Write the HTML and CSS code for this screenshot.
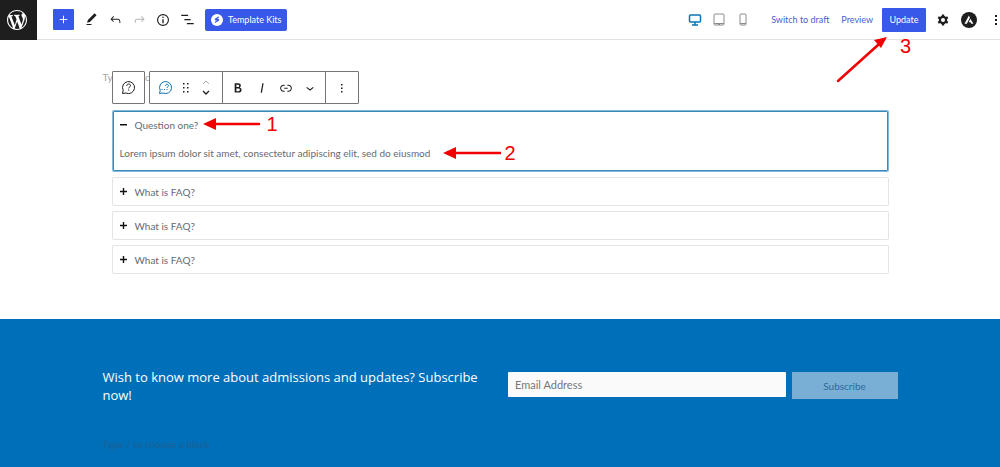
FILE: index.html
```html
<!DOCTYPE html>
<html lang="en">
  <head>
    <meta charset="utf-8" />
    <meta name="viewport" content="width=device-width, initial-scale=1.0" />
    <title>Edit Page</title>
    <link rel="stylesheet" href="styles.css">
  </head>
  <body>
    <header class="topbar">
      <a class="wp-logo" href="#" aria-label="View pages">
        <svg width="20" height="20" viewBox="0 0 20 20" fill="#fff"><path d="M20 10c0-5.51-4.49-10-10-10C4.48 0 0 4.49 0 10c0 5.52 4.48 10 10 10 5.51 0 10-4.48 10-10zM7.78 15.37L4.37 6.22c.55-.02 1.17-.08 1.17-.08.5-.06.44-1.13-.06-1.11 0 0-1.45.11-2.37.11-.18 0-.37 0-.58-.01C4.12 2.69 6.87 1.11 10 1.11c2.33 0 4.45.87 6.05 2.34-.68-.11-1.65.39-1.65 1.58 0 .74.45 1.36.9 2.1.35.61.55 1.36.55 2.46 0 1.49-1.4 5-1.4 5l-3.03-8.37c.54-.02.82-.17.82-.17.5-.05.44-1.25-.06-1.22 0 0-1.44.12-2.38.12-.87 0-2.33-.12-2.33-.12-.5-.03-.56 1.2-.06 1.22l.92.08 1.26 3.41zM17.41 10c.24-.64.74-1.87.43-4.25.7 1.29 1.05 2.71 1.05 4.25 0 3.29-1.73 6.24-4.4 7.78.97-2.59 1.94-5.2 2.92-7.78zM6.1 18.09C3.12 16.65 1.11 13.53 1.11 10c0-1.3.23-2.48.72-3.59C3.25 10.3 4.67 14.2 6.1 18.09zm4.03-6.63l2.58 6.98c-.86.29-1.76.45-2.71.45-.79 0-1.57-.11-2.29-.33.81-2.38 1.62-4.74 2.42-7.1z"/></svg>
      </a>
      <div class="tools">
        <button class="add-block" aria-label="Add block">
          <svg width="15" height="15" viewBox="0 0 24 24" fill="#fff"><path d="M18 11.2h-5.2V6h-1.6v5.2H6v1.6h5.2V18h1.6v-5.2H18z"/></svg>
        </button>
        <button class="icon-btn" aria-label="Tools">
          <svg width="15" height="15" viewBox="0 0 24 24"><path d="M20.1 5.1L16.9 2 6.2 12.7l-1.3 4.4 4.5-1.3L20.1 5.1zM4 20.8h8v-1.5H4v1.5z"/></svg>
        </button>
        <button class="icon-btn" aria-label="Undo">
          <svg width="15" height="15" viewBox="0 0 24 24"><path d="M18.3 11.7c-.6-.6-1.4-.9-2.3-.9H6.7l2.9-3.3-1.1-1-4.5 5L8.5 16l1-1-2.7-2.7H16c.5 0 .9.2 1.3.5 1 1 1 3.4 1 4.5v.3h1.5v-.2c0-1.5 0-4.3-1.5-5.700z"/></svg>
        </button>
        <button class="icon-btn icon-off" aria-label="Redo" disabled>
          <svg width="15" height="15" viewBox="0 0 24 24"><path d="M15.6 6.5l-1.1 1 2.9 3.3H8c-.9 0-1.7.3-2.3.9-1.4 1.5-1.4 4.2-1.4 5.6v.2h1.5v-.3c0-1.1 0-3.5 1-4.5.3-.3.7-.5 1.3-.5h9.2L14.5 15l1.1 1.1 4.6-4.6-4.6-5z"/></svg>
        </button>
        <button class="icon-btn" aria-label="Details">
          <svg width="16" height="16" viewBox="0 0 24 24"><path d="M12 3a9 9 0 1 0 0 18 9 9 0 0 0 0-18zm0 16.3a7.3 7.3 0 1 1 0-14.6 7.3 7.3 0 0 1 0 14.6zM11 11h2v6h-2zM11 7h2v2h-2z"/></svg>
        </button>
        <button class="icon-btn" aria-label="List view">
          <svg width="15" height="15" viewBox="0 0 24 24"><path d="M2 4.500h11v2H2zM7 11h10v2H7zM11 17.500h11v2H11z"/></svg>
        </button>
        <button class="kits">
          <svg width="12" height="12" viewBox="0 0 12 12"><circle cx="6" cy="6" r="6" fill="#fff"/><path d="M7.500 2.300L3.600 5l.4 1.300 2.200.3-2 .6-.2 1.900 4.300-2.700-.5-1.500-2-.3 2-.7z" fill="#3858e9"/></svg>
          Template Kits
        </button>
      </div>
      <div class="actions">
        <button class="icon-btn device active" aria-label="Desktop">
          <svg width="14" height="12" viewBox="0 0 14 12" fill="none" stroke="currentColor"><rect x="1.500" y="1" width="11" height="7" rx="1" stroke-width="1.500"/><path d="M7 8v3M4 11h6" stroke-width="1.500"/></svg>
        </button>
        <button class="icon-btn device" aria-label="Tablet">
          <svg width="12" height="13" viewBox="0 0 12 13" fill="none" stroke="currentColor"><rect x="1" y="1" width="10" height="11" rx="1"/><path d="M1 10.500h10M5 11.500h2"/></svg>
        </button>
        <button class="icon-btn device" aria-label="Mobile">
          <svg width="12" height="13" viewBox="0 0 12 13" fill="none" stroke="currentColor"><rect x="3" y="1" width="6" height="11" rx="1"/><path d="M3 10.500h6"/></svg>
        </button>
        <a class="action-link" href="#">Switch to draft</a>
        <a class="action-link" href="#">Preview</a>
        <div class="update-wrap">
          <button class="update">Update</button>
          <div class="note note-update">
            <svg width="52" height="48" viewBox="0 0 52 48"><path d="M2 45L42 9" stroke="#f00000" stroke-width="2.500" stroke-linecap="round"/><path d="M51 1L45 12 38 4z" fill="#f00000"/></svg>
            <span>3</span>
          </div>
        </div>
        <button class="icon-btn gear" aria-label="Settings">
          <svg width="12" height="12" viewBox="0 0 12 12"><g stroke="#1e1e1e" stroke-width="2.400"><path d="M6 .5v11M1.240 3.250l9.520 5.500M1.240 8.750l9.520-5.500"/></g><circle cx="6" cy="6" r="4.200" fill="#1e1e1e"/><circle cx="6" cy="6" r="2" fill="#fff"/></svg>
        </button>
        <button class="icon-btn astra" aria-label="Astra settings">
          <svg width="16" height="16" viewBox="0 0 16 16"><circle cx="8" cy="8" r="8" fill="#1e1e1e"/><path d="M7.900 3.500l1 2.200-3.100 6H3.500zM9.400 6.700l3 5h-2.100l-.8-1.500H7.700z" fill="#fff"/></svg>
        </button>
        <button class="icon-btn more" aria-label="Options">
          <svg width="4" height="12" viewBox="0 0 4 12"><path d="M1 1h2v2H1zM1 5h2v2H1zM1 9h2v2H1z"/></svg>
        </button>
      </div>
    </header>

    <main class="canvas">
      <p class="prompt">Type / to choose a block</p>

      <div class="faq">
        <div class="block-toolbar">
          <div class="bar">
            <button class="icon-btn" aria-label="Select FAQ">
              <svg width="15" height="15" viewBox="0 0 15 15" fill="none" stroke="currentColor"><path d="M1.500 13.500l.7-3.200A6 6 0 1 1 5 13z"/><path d="M5.800 5.800c0-2.400 3.700-2.400 3.700-.1 0 1.300-1.800 1.300-1.800 2.700M7.700 9.500v1.200"/></svg>
            </button>
          </div>
          <div class="bar">
            <div class="group">
              <button class="icon-btn child" aria-label="FAQ child">
                <svg width="15" height="15" viewBox="0 0 15 15" fill="none" stroke="currentColor"><path d="M1.500 13.500l.7-3.200A6 6 0 1 1 5 13z"/><path d="M7.500 5.800c0-2 3-2 3-.1 0 1.100-1.500 1.100-1.500 2.300M9 9v1M4 9v1M6.500 9v1"/></svg>
              </button>
              <button class="icon-btn drag" aria-label="Drag">
                <svg width="8" height="12" viewBox="0 0 8 12"><path d="M1 1h1.500v1.500H1zM5 1h1.500v1.500H5zM1 5h1.500v1.500H1zM5 5h1.500v1.500H5zM1 9h1.500v1.500H1zM5 9h1.500v1.500H5z"/></svg>
              </button>
              <button class="icon-btn" aria-label="Move">
                <svg width="10" height="16" viewBox="0 0 10 16" fill="none"><path d="M2 4l3-3 3 3" stroke="#aaa"/><path d="M2 11l3 3 3-3" stroke="#1e1e1e" stroke-width="1.300"/></svg>
              </button>
            </div>
            <div class="group format">
              <button class="icon-btn" aria-label="Bold">
                <svg width="16" height="16" viewBox="0 0 24 24"><path d="M14.7 11.3c1-.6 1.5-1.6 1.5-3 0-2.300-1.300-3.400-4-3.400H7v14h5.800c1.400 0 2.500-.3 3.300-1 .8-.7 1.200-1.700 1.200-2.900.1-1.900-.8-3.100-2.600-3.700zm-5.100-4h2.300c.6 0 1.100.1 1.400.4.3.3.5.7.5 1.200s-.2 1-.5 1.200c-.3.3-.8.4-1.400.4H9.600V7.300zm4.600 9c-.4.3-1 .4-1.700.4H9.600v-3.900h2.900c.7 0 1.300.2 1.700.5.4.3.6.8.6 1.500s-.2 1.200-.6 1.500z"/></svg>
              </button>
              <button class="icon-btn" aria-label="Italic">
                <svg width="16" height="16" viewBox="0 0 24 24"><path d="M12.500 5L10 19h1.900l2.500-14z"/></svg>
              </button>
              <button class="icon-btn" aria-label="Link">
                <svg width="16" height="16" viewBox="0 0 24 24"><path d="M15.600 7.200H14v1.500h1.600c2 0 3.700 1.700 3.700 3.700s-1.700 3.700-3.700 3.700H14v1.500h1.600c2.800 0 5.200-2.300 5.200-5.200 0-2.900-2.300-5.200-5.200-5.200zM4.700 12.400c0-2 1.700-3.700 3.700-3.700H10V7.200H8.400c-2.900 0-5.200 2.300-5.200 5.200 0 2.900 2.300 5.200 5.200 5.200H10v-1.500H8.400c-2 0-3.700-1.700-3.700-3.700zm4.600.9h5.300v-1.500H9.300v1.500z"/></svg>
              </button>
              <button class="icon-btn" aria-label="More formatting">
                <svg width="16" height="16" viewBox="0 0 24 24"><path d="M17.500 11.600L12 16l-5.500-4.400.9-1.200L12 14l4.500-3.600 1 1.200z"/></svg>
              </button>
            </div>
            <div class="group">
              <button class="icon-btn" aria-label="Block options">
                <svg width="4" height="12" viewBox="0 0 4 12"><path d="M1 2h1.500v1.500H1zM1 5.500h1.500V7H1zM1 9h1.500v1.500H1z"/></svg>
              </button>
            </div>
          </div>
        </div>

        <details class="faq-item selected" open>
          <summary><svg width="7" height="7" viewBox="0 0 7 7"><path d="M0 3h7v1.500H0z"/></svg>Question one?</summary>
          <p>Lorem ipsum dolor sit amet, consectetur adipiscing elit, sed do eiusmod</p>
          <div class="note note-question">
            <svg width="58" height="12" viewBox="0 0 58 12"><path d="M10 6h46" stroke="#f00000" stroke-width="2.500" stroke-linecap="round"/><path d="M0 6L13 0v12z" fill="#f00000"/></svg>
            <span>1</span>
          </div>
          <div class="note note-answer">
            <svg width="58" height="12" viewBox="0 0 58 12"><path d="M10 6h48" stroke="#f00000" stroke-width="2.500" stroke-linecap="round"/><path d="M0 6L13 0v12z" fill="#f00000"/></svg>
            <span>2</span>
          </div>
        </details>
        <details class="faq-item">
          <summary><svg width="7" height="7" viewBox="0 0 7 7"><path d="M0 2.800h2.800V0h1.400v2.800H7v1.400H4.200V7H2.800V4.200H0z"/></svg>What is FAQ?</summary>
        </details>
        <details class="faq-item">
          <summary><svg width="7" height="7" viewBox="0 0 7 7"><path d="M0 2.800h2.800V0h1.400v2.800H7v1.400H4.200V7H2.800V4.200H0z"/></svg>What is FAQ?</summary>
        </details>
        <details class="faq-item">
          <summary><svg width="7" height="7" viewBox="0 0 7 7"><path d="M0 2.800h2.800V0h1.400v2.800H7v1.400H4.200V7H2.800V4.200H0z"/></svg>What is FAQ?</summary>
        </details>
      </div>
    </main>

    <section class="subscribe">
      <div class="subscribe-inner">
        <div class="columns">
          <h2>Wish to know more about admissions and updates? Subscribe now!</h2>
          <form class="signup">
            <input type="email" placeholder="Email Address" aria-label="Email Address">
            <button type="button">Subscribe</button>
          </form>
        </div>
        <p class="prompt">Type / to choose a block</p>
      </div>
    </section>
  </body>
</html>
```
FILE: styles.css
```css
* {
  box-sizing: border-box;
}
html {
  --blue: #3858e9;
  --section: #006fba;
  --dark: #1e1e1e;
}
body {
  margin: 0;
  min-height: 100vh;
  display: flex;
  flex-direction: column;
  overflow-x: hidden;
  font-family: Lato, "Open Sans", sans-serif;
  font-size: 10px;
  color: #666a70;
  background: #fff;
}
button,
input {
  font: inherit;
}
button {
  padding: 0;
  border: none;
  cursor: pointer;
}
svg {
  display: block;
  flex: none;
}
p,
h2 {
  margin: 0;
}

/* top bar */
.topbar {
  display: flex;
  height: 40px;
  border-bottom: 1px solid #e2e2e2;
  font-size: 9px;
}
.wp-logo {
  display: flex;
  align-items: center;
  justify-content: center;
  width: 37px;
  height: 40px;
  padding-right: 3px;
  background: var(--dark);
}
.tools,
.actions {
  display: flex;
  align-items: center;
}
.tools {
  padding-left: 16px;
}
.icon-btn {
  display: flex;
  align-items: center;
  justify-content: center;
  flex: none;
  width: 24px;
  height: 24px;
  color: var(--dark);
  fill: currentColor;
  background: none;
}
.icon-off {
  color: #b4b4b4;
}
.add-block {
  display: flex;
  align-items: center;
  justify-content: center;
  width: 21px;
  height: 21px;
  margin-right: 5px;
  border-radius: 1px;
  background: var(--blue);
}
.kits {
  display: flex;
  align-items: center;
  gap: 5px;
  height: 22px;
  margin-left: 6px;
  padding: 0 6px;
  border-radius: 2px;
  color: #fff;
  background: var(--blue);
}
.actions {
  margin-left: auto;
}
.device {
  color: #8c8c8c;
}
.device.active {
  color: #0a75b5;
}
.action-link {
  margin-left: 12px;
  color: #4560d8;
  text-decoration: none;
}
.device + .action-link {
  margin-left: 16px;
}
.update-wrap {
  position: relative;
  margin: 0 5px 0 9px;
}
.update {
  width: 44px;
  height: 24px;
  border-radius: 1px;
  color: #fff;
  background: var(--blue);
}
.astra {
  margin-left: 2px;
}
.more {
  width: 20px;
  margin-left: 5px;
  margin-right: -6px;
}

/* red numbered arrows */
.note {
  position: absolute;
  display: flex;
  align-items: center;
  gap: 6px;
  font: 20px/20px "Liberation Sans", Arial, sans-serif;
  color: #f00000;
}
.note-update {
  top: 28px;
  left: -46px;
  align-items: flex-start;
  gap: 12px;
}
.note-question {
  top: 2px;
  left: 89px;
}
.note-answer {
  top: 31px;
  left: 329px;
  gap: 4px;
}

/* editor canvas */
.canvas,
.subscribe-inner {
  width: 100%;
  max-width: 835px;
  margin: 0 auto;
  padding: 0 20px;
}
.canvas {
  padding-top: 30px;
  padding-bottom: 46px;
}
.prompt {
  line-height: 14px;
  color: #a5a5a5;
}
.faq {
  position: relative;
  display: grid;
  gap: 7px;
  margin: 27px 10px 0;
}
.block-toolbar {
  position: absolute;
  top: -40px;
  left: -1px;
  display: flex;
  gap: 4px;
}
.bar {
  display: flex;
  height: 33px;
  border: 1px solid #757575;
  border-radius: 1px;
  background: #fff;
}
.bar > .icon-btn {
  width: 31px;
  height: 31px;
}
.group {
  display: flex;
  align-items: center;
  padding: 0 4px;
}
.group + .group {
  border-left: 1px solid #757575;
}
.group.format {
  padding: 0 3px;
}
.group .child {
  color: #0a75b5;
}
.group .drag {
  width: 16px;
}
.faq-item {
  position: relative;
  border-radius: 1px;
  box-shadow: 0 0 0 1px #e4e4e4;
}
.faq-item.selected {
  border: 1px solid #3b87b5;
  box-shadow: 0 0 0 1px #7fb9dc;
}
.faq-item summary {
  display: flex;
  align-items: center;
  gap: 8px;
  height: 27px;
  padding: 0 7px;
  list-style: none;
  fill: #111;
}
.faq-item.selected summary {
  height: 25px;
}
.faq-item.selected summary,
.faq-item.selected p {
  padding-left: 6px;
}
.faq-item p {
  padding: 9px 7px 10px;
  line-height: 14px;
}

/* subscribe section */
.subscribe {
  flex: 1;
  background: var(--section);
}
.subscribe-inner {
  padding-top: 49px;
}
.columns {
  display: grid;
  grid-template-columns: 1fr 1fr;
  gap: 16px;
}
.columns h2 {
  font-family: "Open Sans", sans-serif;
  font-size: 13px;
  font-weight: 400;
  line-height: 18px;
  color: #fff;
}
.signup {
  display: flex;
  align-items: flex-start;
  gap: 6px;
  padding-top: 4px;
}
.signup input {
  flex: 1;
  min-width: 0;
  height: 25px;
  padding: 0 7px;
  border: none;
  border-radius: 1px;
  font-size: 11px;
  color: #666a70;
  background: #fafafa;
}
.signup input::placeholder {
  color: #777;
  opacity: 1;
}
.signup button {
  width: 106px;
  height: 27px;
  color: #2b6a9b;
  background: #7aafd5;
}
.subscribe .prompt {
  margin-top: 33px;
  color: #1e5f91;
}
```
